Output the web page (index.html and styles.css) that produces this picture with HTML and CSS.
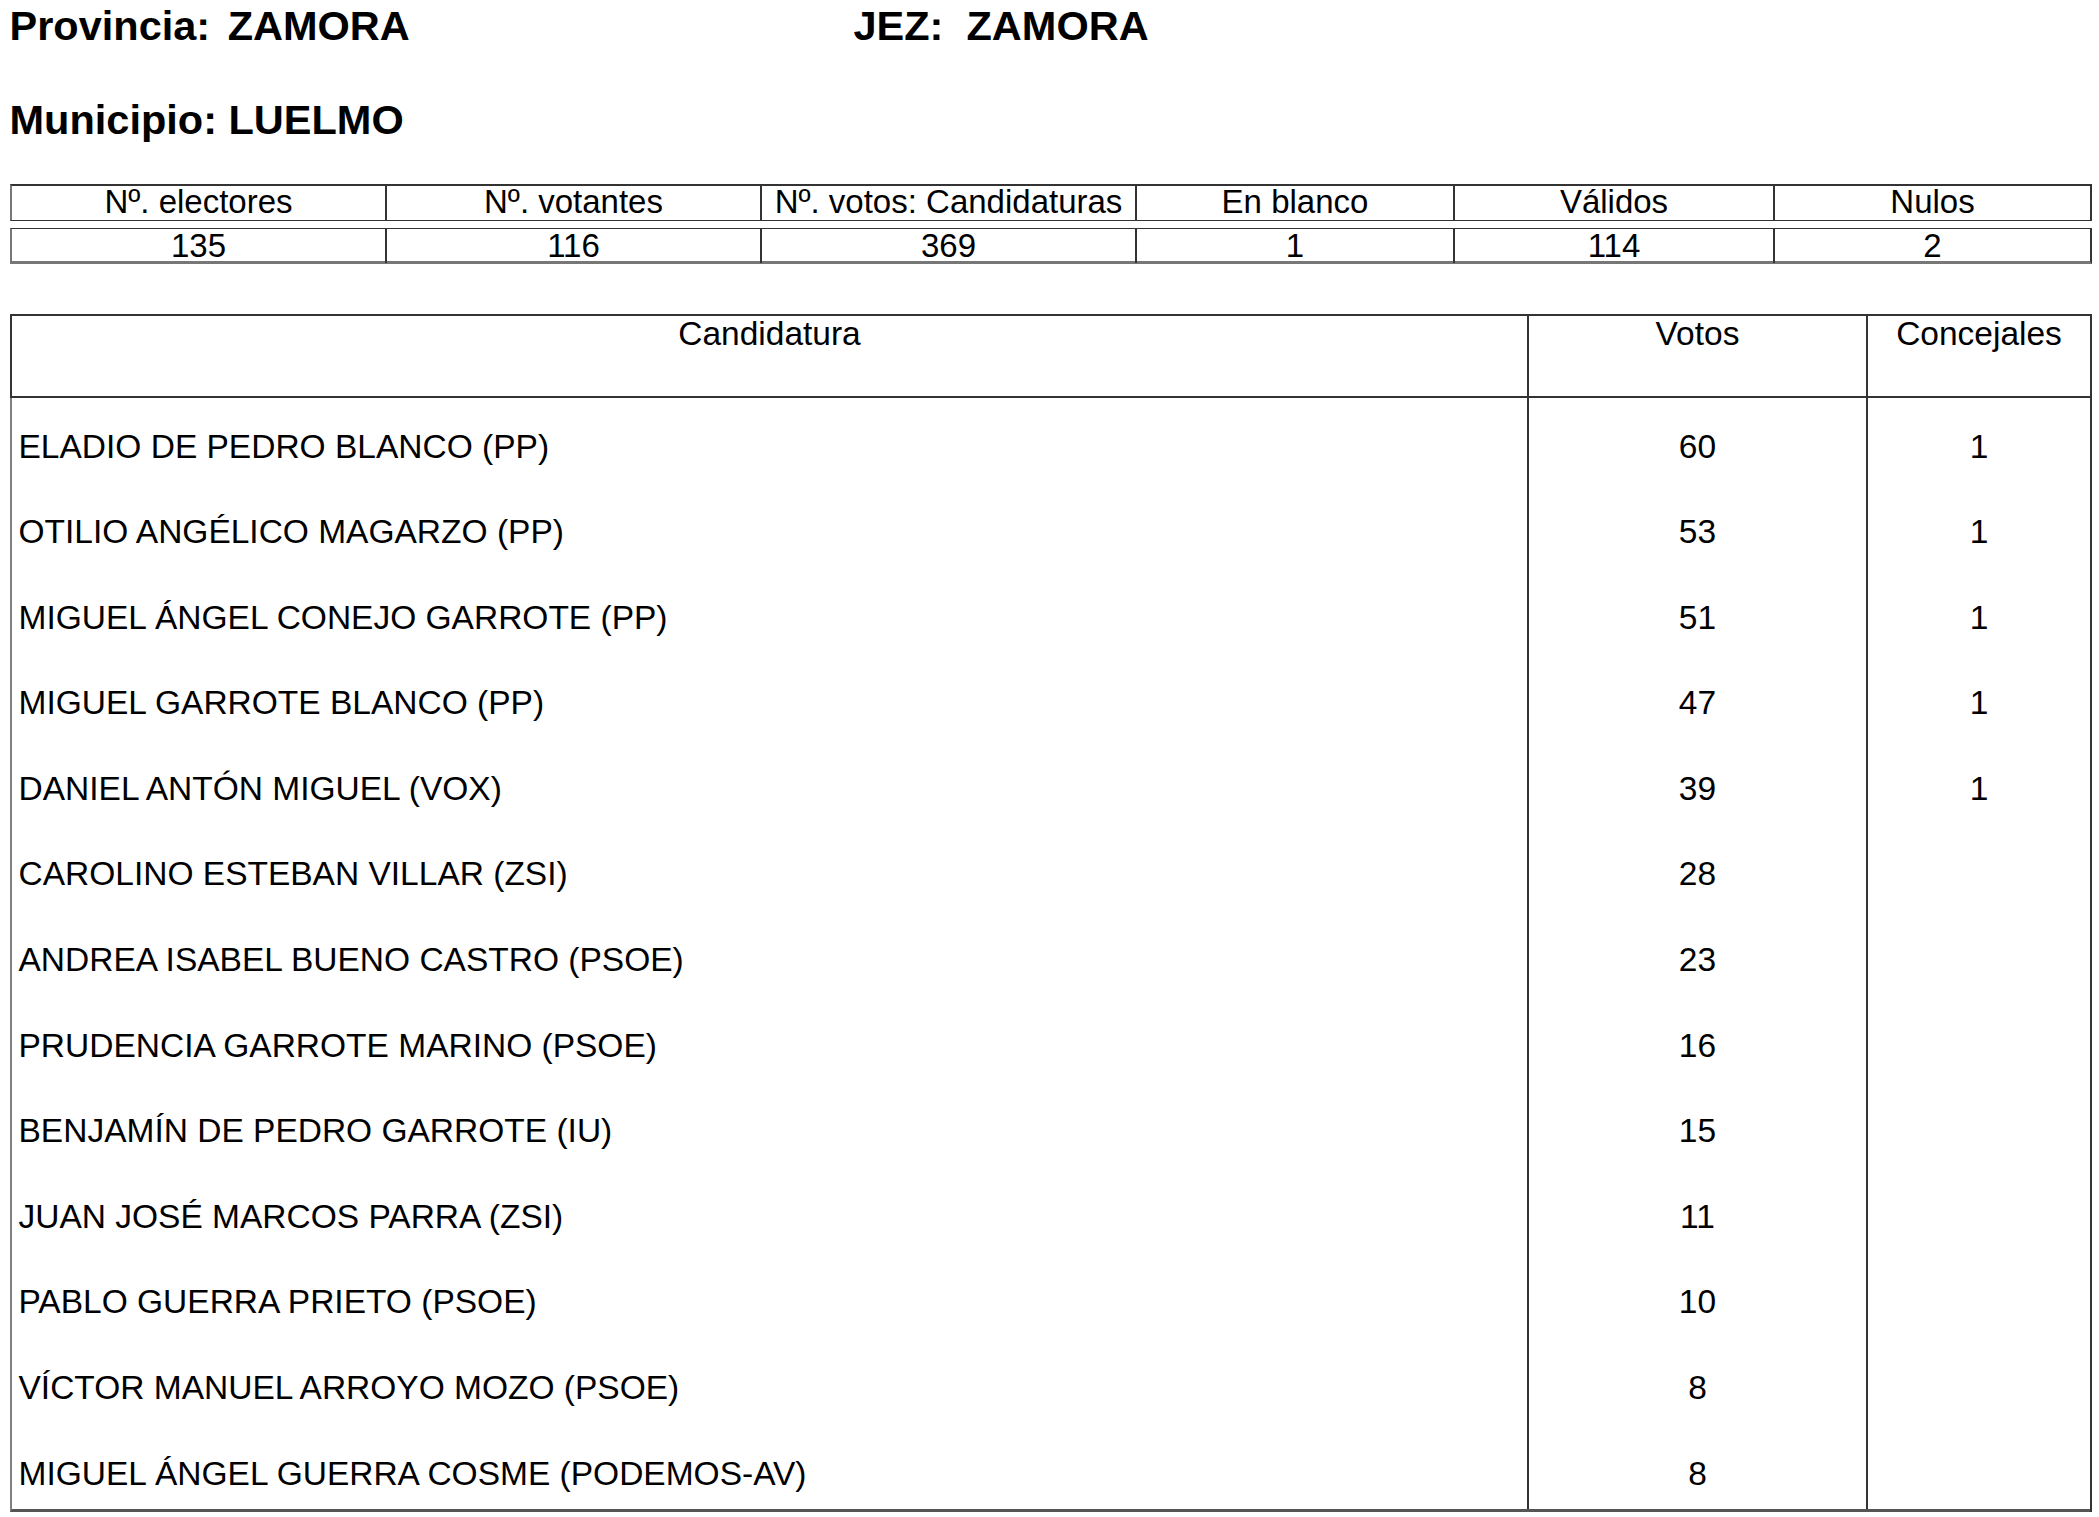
FILE: index.html
```html
<!DOCTYPE html>
<html lang="es">
<head>
<meta charset="utf-8">
<title>Resultados LUELMO</title>
<link rel="stylesheet" href="styles.css">
</head>
<body>
<div class="page">
  <div class="title-row">
    <div class="title prov">Provincia: ZAMORA</div>
    <div class="title">JEZ:&nbsp; ZAMORA</div>
  </div>
  <div class="title muni">Municipio: LUELMO</div>

  <div class="summary">
    <div class="sum-row sum-head">
      <div class="cell">Nº. electores</div>
      <div class="cell">Nº. votantes</div>
      <div class="cell">Nº. votos: Candidaturas</div>
      <div class="cell">En blanco</div>
      <div class="cell">Válidos</div>
      <div class="cell">Nulos</div>
    </div>
    <div class="sum-row sum-vals">
      <div class="cell">135</div>
      <div class="cell">116</div>
      <div class="cell">369</div>
      <div class="cell">1</div>
      <div class="cell">114</div>
      <div class="cell">2</div>
    </div>
  </div>

  <div class="results">
    <div class="res-row res-head">
      <div class="rcell name-h">Candidatura</div>
      <div class="rcell num">Votos</div>
      <div class="rcell num">Concejales</div>
    </div>
    <div class="res-row"><div class="rcell name">ELADIO DE PEDRO BLANCO (PP)</div><div class="rcell num">60</div><div class="rcell num">1</div></div>
    <div class="res-row"><div class="rcell name">OTILIO ANGÉLICO MAGARZO (PP)</div><div class="rcell num">53</div><div class="rcell num">1</div></div>
    <div class="res-row"><div class="rcell name">MIGUEL ÁNGEL CONEJO GARROTE (PP)</div><div class="rcell num">51</div><div class="rcell num">1</div></div>
    <div class="res-row"><div class="rcell name">MIGUEL GARROTE BLANCO (PP)</div><div class="rcell num">47</div><div class="rcell num">1</div></div>
    <div class="res-row"><div class="rcell name">DANIEL ANTÓN MIGUEL (VOX)</div><div class="rcell num">39</div><div class="rcell num">1</div></div>
    <div class="res-row"><div class="rcell name">CAROLINO ESTEBAN VILLAR (ZSI)</div><div class="rcell num">28</div><div class="rcell num"></div></div>
    <div class="res-row"><div class="rcell name">ANDREA ISABEL BUENO CASTRO (PSOE)</div><div class="rcell num">23</div><div class="rcell num"></div></div>
    <div class="res-row"><div class="rcell name">PRUDENCIA GARROTE MARINO (PSOE)</div><div class="rcell num">16</div><div class="rcell num"></div></div>
    <div class="res-row"><div class="rcell name">BENJAMÍN DE PEDRO GARROTE (IU)</div><div class="rcell num">15</div><div class="rcell num"></div></div>
    <div class="res-row"><div class="rcell name">JUAN JOSÉ MARCOS PARRA (ZSI)</div><div class="rcell num">11</div><div class="rcell num"></div></div>
    <div class="res-row"><div class="rcell name">PABLO GUERRA PRIETO (PSOE)</div><div class="rcell num">10</div><div class="rcell num"></div></div>
    <div class="res-row"><div class="rcell name">VÍCTOR MANUEL ARROYO MOZO (PSOE)</div><div class="rcell num">8</div><div class="rcell num"></div></div>
    <div class="res-row res-last"><div class="rcell name">MIGUEL ÁNGEL GUERRA COSME (PODEMOS-AV)</div><div class="rcell num">8</div><div class="rcell num"></div></div>
  </div>
</div>
</body>
</html>
```
FILE: styles.css
```css
* { box-sizing: border-box; }

html, body {
  margin: 0;
  padding: 0;
  background: #ffffff;
  color: #000000;
  font-family: "Liberation Sans", Arial, sans-serif;
}

.page {
  padding: 2px 0 0 9.5px;
  width: 2099px;
}

.title-row {
  display: flex;
}

.title {
  font-size: 41.5px;
  font-weight: bold;
  line-height: 47px;
  white-space: nowrap;
}

.prov {
  width: 844px;
  word-spacing: 6px;
}

.muni {
  margin-top: 47px;
}

.summary {
  margin-top: 41px;
  margin-left: 0.5px;
  width: 2082px;
}

.sum-row {
  display: grid;
  grid-template-columns: 375px 375px 375px 318px 320px 1fr;
  border: 2px solid #333333;
  font-size: 33px;
  text-align: center;
}

.sum-head {
  height: 37px;
  border-bottom-width: 1.5px;
  border-left-color: #777777;
}

.sum-vals {
  margin-top: 7px;
  height: 36px;
  border-top-width: 1.5px;
  border-left-color: #777777;
  border-bottom: 3px solid #777777;
}

.cell {
  border-right: 2px solid #333333;
  line-height: 32px;
  white-space: nowrap;
}

.sum-vals .cell {
  line-height: 34px;
}

.cell:last-child {
  border-right: none;
}

.results {
  margin-top: 50px;
  margin-left: 0.5px;
  width: 2082px;
  border-top: 2px solid #333333;
  border-right: 2px solid #333333;
  border-left: 2px solid #333333;
}

.res-row {
  display: grid;
  grid-template-columns: 1517px 339px 1fr;
  height: 85.6px;
  font-size: 33.5px;
}

.res-row:not(.res-head) {
  margin-left: -2px;
  border-left: 2px solid #808080;
}

.res-head {
  height: 81.5px;
  border-bottom: 2px solid #333333;
}

.res-last {
  border-bottom: 3px solid #555555;
  height: 87px;
}

.rcell {
  border-right: 2px solid #333333;
  line-height: 38px;
  padding-top: 30px;
  white-space: nowrap;
}

.rcell:last-child {
  border-right: none;
}

.res-head .rcell {
  padding-top: 0;
  line-height: 35px;
  text-align: center;
}

.name {
  padding-left: 6.5px;
}

.num {
  text-align: center;
}
```
